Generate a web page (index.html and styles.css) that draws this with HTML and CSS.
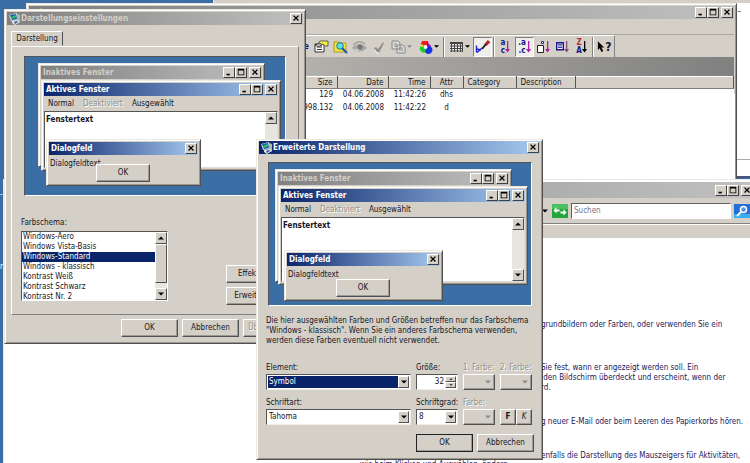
FILE: index.html
```html
<!DOCTYPE html>
<html lang="de">
<head>
<meta charset="utf-8">
<title>Darstellungseinstellungen</title>
<link rel="stylesheet" href="styles.css">
</head>
<body>
<svg class="defs" aria-hidden="true">
  <symbol id="min" viewBox="0 0 12 11"><path d="M3 7h4v2H3z"/></symbol>
  <symbol id="max" viewBox="0 0 12 11"><path d="M2 1h8v8H2zM3 3v5h6V3z" fill-rule="evenodd"/></symbol>
  <symbol id="close" viewBox="0 0 12 11"><path d="M3 2l6 6M9 2l-6 6" stroke="#000" stroke-width="1.6"/></symbol>
  <symbol id="down" viewBox="0 0 8 8"><path d="M1 2.500h6L4 5.500z"/></symbol>
  <symbol id="up" viewBox="0 0 8 8"><path d="M1 5.500h6L4 2.500z"/></symbol>
  <symbol id="screen" viewBox="0 0 12 12">
    <path d="M0 2l8-2 1 7-7 1z" fill="#c4dcd4"/><path d="M1 2l6-1 1 5-5 1z" fill="#1c5bb8"/>
    <path d="M2 4l5-2 .5 2L3 6z" fill="#35c15a"/><path d="M8 1l3 1v7l-3 1z" fill="#a9bba9"/>
    <path d="M3 8l6-1 2 2-5 3-3-2z" fill="#dfe6e0"/><path d="M5 9l3-1 1 1-3 2z" fill="#3a5a9c"/>
  </symbol>
  <symbol id="arrow" viewBox="0 0 5 12"><path d="M2 0h1.300v8H5l-2.400 3.500L0 8h2z"/></symbol>
</svg>

<main class="desktop">
  <span class="mark">--</span>
  <span class="shortcut">r</span>

  <section class="back-window" aria-label="Hintergrundfenster"><div class="back-page">–</div><div class="back-foot"></div></section>

  <section class="window manager" aria-label="Dateimanager">
    <header class="title idle">
      <svg class="folder" viewBox="0 0 10 10"><path d="M0 3q5-5 10 0v7H0z" fill="#efe239"/></svg>
      <span class="grow"></span>
      <button aria-label="Minimieren"><svg><use href="#min"/></svg></button><button aria-label="Maximieren"><svg><use href="#max"/></svg></button><button class="apart" aria-label="Schließen"><svg><use href="#close"/></svg></button>
    </header>
    <div class="manager-menu"></div>
    <div class="toolbar">
      <span class="tool-text">e</span>
      <button aria-label="Eigenschaften"><svg viewBox="0 0 15 14"><path d="M1 4h9v8H1z" fill="#fff" stroke="#333"/><path d="M3 7h5M3 9.500h5" stroke="#333"/><path d="M6 1h8v5h-3L9 4 6 6 4 4z" fill="#f2ee4a" stroke="#444" stroke-width=".8"/><path d="M1 5l5-2 2 2-4 2z" fill="#bbb" stroke="#222" stroke-width=".7"/></svg></button>
      <button aria-label="Suchen im Ordner"><svg viewBox="0 0 15 14"><path d="M1 2h5l1 1h6v9H1z" fill="#f5e43e" stroke="#ad9a21"/><circle cx="7" cy="6" r="3.300" fill="#5fe0e6" stroke="#237b9a"/><path d="M9 8l5 5" stroke="#1c51b5" stroke-width="2"/></svg></button>
      <button aria-label="Ansehen"><svg viewBox="0 0 15 14"><path d="M0 8q7-8 15 0-8 7-15 0z" fill="#a5a5a1"/><circle cx="8" cy="7" r="2.500" fill="#777"/><path d="M1 5q6-6 12-1" fill="none" stroke="#888"/><path d="M3 9q2 2 4 1" fill="none" stroke="#eee"/></svg></button>
      <button aria-label="Prüfen"><svg viewBox="0 0 15 14"><path d="M3 8l2-1 2 2 5-7 1 1-5 10H6z" fill="#929292"/><path d="M4 10l2 3 2 0" fill="none" stroke="#fff"/></svg></button>
      <button class="wide" aria-label="Kopieren"><svg viewBox="0 0 15 14"><path d="M1 1h6l2 2v6H1zM6 5h6l2 2v6H6z" fill="#ddd" stroke="#888"/><path d="M3 4h3M3 6h3M8 8h4M8 10h4" stroke="#888"/></svg><svg class="drop faded"><use href="#down"/></svg></button>
      <button class="wide" aria-label="Farben"><svg viewBox="0 0 15 14"><path d="M7 1a3.500 3.500 0 0 0-3 6h3z" fill="#ed1c24"/><path d="M4 1h6l1 5H3z" fill="#ed1c24"/><path d="M9 2l4 4v3l-4-2z" fill="#8a12b0"/><path d="M4 5a4 4 0 1 0 4 7l-1-5z" fill="#18cf2a"/><path d="M11 6a4 4 0 1 1-4 6l1-4z" fill="#1733e0"/><path d="M2 6l2-2 2 2-2 1z" fill="#f7e21e"/><circle cx="7.500" cy="7" r="1.900" fill="#fff"/></svg><svg class="drop"><use href="#down"/></svg></button>
      <i class="rule"></i>
      <button class="wide" aria-label="Tabelle"><svg viewBox="0 0 15 14"><path d="M1 2h13v10H1z" fill="#eee"/><path d="M1 3h13" stroke="#444" stroke-width="2"/><path d="M1 6h13M1 8.500h13M1 11h13M2.500 2v10M5.500 2v10M8.500 2v10M11.500 2v10M13.500 2v10" stroke="#444" fill="none"/></svg><svg class="drop"><use href="#down"/></svg></button>
      <button class="pressed" aria-label="Filter"><svg viewBox="0 0 15 14"><path d="M14 1l-3.500 4" stroke="#b7202a" stroke-width="3"/><path d="M11 4L7 9" stroke="#222" stroke-width="2"/><path d="M1.500 5.500v7M2 9l4 1M2 12.500L7 8" stroke="#2024d0" stroke-width="1.400" fill="none"/></svg></button>
      <i class="rule"></i>
      <button class="sort" aria-label="Nach Name sortieren"><span>a<br>c</span><svg class="pink"><use href="#arrow"/></svg></button>
      <button class="sort pressed" aria-label="Nach Erweiterung sortieren"><span>.a<br>.c</span><svg class="pink"><use href="#arrow"/></svg></button>
      <button class="sort" aria-label="Nach Größe sortieren"><svg viewBox="0 0 8 13"><path d="M.5 5.500h6v7h-6z" fill="#fff" stroke="#222"/><path d="M4.500 1.500h2v2h-2z" fill="#fff" stroke="#2a2a8a"/></svg><svg class="pink"><use href="#arrow"/></svg></button>
      <button class="sort" aria-label="Nach Datum sortieren"><svg viewBox="0 0 8 13"><path d="M.7 2.700h6.600v7H.7z" fill="#fff" stroke="#15158c" stroke-width="1.400"/><path d="M2 4.500h4M2 6h4M2 7.500h4" stroke="#15158c" stroke-width=".8"/></svg><svg class="mauve"><use href="#arrow"/></svg></button>
      <button class="sort" aria-label="Absteigend"><span><b>Z</b><br>A</span><svg><use href="#arrow"/></svg></button>
      <i class="rule"></i>
      <button class="help" aria-label="Hilfe"><svg viewBox="0 0 9 13"><path d="M1 0l7 7H5l2 4-2 1-2-4-2 2z"/></svg><span>?</span></button>
    </div>
    <div class="path-bar"></div>
    <table class="files">
      <colgroup><col class="c-size"><col class="c-date"><col class="c-time"><col class="c-attr"><col class="c-cat"><col class="c-desc"><col></colgroup>
      <thead><tr><th class="num">Size</th><th class="num">Date</th><th class="num">Time</th><th class="mid">Attr</th><th>Category</th><th>Description</th><th></th></tr></thead>
      <tbody>
        <tr><td class="num">129</td><td class="num">04.06.2008</td><td class="num">11:42:26</td><td class="mid">dhs</td><td></td><td></td><td></td></tr>
        <tr><td class="num">998.132</td><td class="num">04.06.2008</td><td class="num">11:42:22</td><td class="mid">d</td><td></td><td></td><td></td></tr>
      </tbody>
    </table>
  </section>

  <section class="window explorer" aria-label="Anpassung">
    <header class="title idle"><span class="grow"></span>
      <button aria-label="Minimieren"><svg><use href="#min"/></svg></button><button aria-label="Maximieren"><svg><use href="#max"/></svg></button><button class="apart" aria-label="Schließen"><svg><use href="#close"/></svg></button>
    </header>
    <div class="address">
      <svg class="drop"><use href="#down"/></svg>
      <button class="refresh" aria-label="Aktualisieren"><svg viewBox="0 0 16 14"><path d="M0 0h16v14H0z" fill="#22a53a"/><path d="M0 0h16v5H0z" fill="#4cc060"/><path d="M4.500 3L1.500 6.500l3 3v-2h3v-2h-3z" fill="#fff"/><path d="M11.500 5l3 3.500-3 3v-2h-3v-2h3z" fill="#fff"/></svg></button>
      <input type="search" placeholder="Suchen" aria-label="Suchen">
      <button class="lens" aria-label="Suche starten"><svg viewBox="0 0 16 14"><path d="M0 0h16v14H0z" fill="#236fd8"/><path d="M0 10h16v4H0z" fill="#35b0f4"/><circle cx="9.500" cy="5.500" r="3" fill="#4d8fe2" stroke="#fff" stroke-width="1.600"/><path d="M7 8l-4 4" stroke="#fff" stroke-width="2"/></svg></button>
    </div>
    <div class="explorer-menu"></div>
    <div class="page">
      <p class="first">grundbildern oder Farben, oder verwenden Sie ein</p>
      <p>Sie fest, wann er angezeigt werden soll. Ein<br>&nbsp;den Bildschirm überdeckt und erscheint, wenn der<br>rd.</p>
      <p>g neuer E-Mail oder beim Leeren des Papierkorbs hören.</p>
      <p>enfalls die Darstellung des Mauszeigers für Aktivitäten,</p>
      <p class="last">wie beim Klicken und Auswählen, ändern.</p>
    </div>
  </section>

  <section class="window settings" aria-label="Darstellungseinstellungen">
    <header class="title idle"><svg class="app"><use href="#screen"/></svg><h1>Darstellungseinstellungen</h1>
      <button aria-label="Schließen"><svg><use href="#close"/></svg></button></header>
    <div class="tabs"><button class="tab">Darstellung</button></div>
    <div class="pane">
      <div class="preview small">
        <div class="mini inactive"><div class="title idle"><h2>Inaktives Fenster</h2><button aria-label="Minimieren"><svg><use href="#min"/></svg></button><button aria-label="Maximieren"><svg><use href="#max"/></svg></button><button class="apart" aria-label="Schließen"><svg><use href="#close"/></svg></button></div></div>
        <div class="mini active">
          <div class="title"><h2>Aktives Fenster</h2><button aria-label="Minimieren"><svg><use href="#min"/></svg></button><button aria-label="Maximieren"><svg><use href="#max"/></svg></button><button class="apart" aria-label="Schließen"><svg><use href="#close"/></svg></button></div>
          <div class="menu"><span>Normal</span><span class="off">Deaktiviert</span><span>Ausgewählt</span></div>
          <div class="sheet"><b>Fenstertext</b><div class="scroll"><button aria-label="Nach oben"><svg><use href="#up"/></svg></button><i></i><button aria-label="Nach unten"><svg><use href="#down"/></svg></button></div></div>
        </div>
        <div class="mini dialog"><div class="title"><h2>Dialogfeld</h2><button aria-label="Schließen"><svg><use href="#close"/></svg></button></div><p>Dialogfeldtext</p><button class="push">OK</button></div>
      </div>
      <div class="scheme">
        <div>
          <label for="scheme">Farbschema:</label>
          <div class="list">
            <select id="scheme" size="7"><option>Windows-Aero</option><option>Windows Vista-Basis</option><option selected>Windows-Standard</option><option>Windows - klassisch</option><option>Kontrast Weiß</option><option>Kontrast Schwarz</option><option>Kontrast Nr. 2</option></select>
            <div class="scroll"><button aria-label="Nach oben"><svg><use href="#up"/></svg></button><i class="thumb"></i><button aria-label="Nach unten"><svg><use href="#down"/></svg></button></div>
          </div>
        </div>
        <div class="side"><button class="push">Effekte...</button><button class="push">Erweitert...</button></div>
      </div>
    </div>
    <footer class="actions"><button class="push">OK</button><button class="push">Abbrechen</button><button class="push off" disabled>Übernehmen</button></footer>
  </section>

  <section class="window advanced" aria-label="Erweiterte Darstellung">
    <header class="title"><svg class="app"><use href="#screen"/></svg><h1>Erweiterte Darstellung</h1>
      <button aria-label="Schließen"><svg><use href="#close"/></svg></button></header>
    <div class="preview large">
      <div class="mini inactive"><div class="title idle"><h2>Inaktives Fenster</h2><button aria-label="Minimieren"><svg><use href="#min"/></svg></button><button aria-label="Maximieren"><svg><use href="#max"/></svg></button><button class="apart" aria-label="Schließen"><svg><use href="#close"/></svg></button></div></div>
      <div class="mini active">
        <div class="title"><h2>Aktives Fenster</h2><button aria-label="Minimieren"><svg><use href="#min"/></svg></button><button aria-label="Maximieren"><svg><use href="#max"/></svg></button><button class="apart" aria-label="Schließen"><svg><use href="#close"/></svg></button></div>
        <div class="menu"><span>Normal</span><span class="off">Deaktiviert</span><span>Ausgewählt</span></div>
        <div class="sheet"><b>Fenstertext</b><div class="scroll"><button aria-label="Nach oben"><svg><use href="#up"/></svg></button><i></i><button aria-label="Nach unten"><svg><use href="#down"/></svg></button></div></div>
      </div>
      <div class="mini dialog"><div class="title"><h2>Dialogfeld</h2><button aria-label="Schließen"><svg><use href="#close"/></svg></button></div><p>Dialogfeldtext</p><button class="push">OK</button></div>
    </div>
    <p class="note">Die hier ausgewählten Farben und Größen betreffen nur das Farbschema<br>"Windows - klassisch". Wenn Sie ein anderes Farbschema verwenden,<br>werden diese Farben eventuell nicht verwendet.</p>
    <form class="fields">
      <div><label for="element">Element:</label><div class="combo chosen"><select id="element"><option>Symbol</option></select><span class="knob"><svg><use href="#down"/></svg></span></div></div>
      <div><label for="size">Größe:</label><div class="combo"><input id="size" type="text" value="32"><span class="spin"><span><svg><use href="#up"/></svg></span><span><svg><use href="#down"/></svg></span></span></div></div>
      <div><label class="off" for="color1">1. Farbe:</label><button type="button" id="color1" class="push color" disabled><svg><use href="#down"/></svg></button></div>
      <div><label class="off" for="color2">2. Farbe:</label><button type="button" id="color2" class="push color" disabled><svg><use href="#down"/></svg></button></div>
      <div><label for="font">Schriftart:</label><div class="combo"><select id="font"><option>Tahoma</option></select><span class="knob"><svg><use href="#down"/></svg></span></div></div>
      <div><label for="points">Schriftgrad:</label><div class="combo"><select id="points"><option>8</option></select><span class="knob"><svg><use href="#down"/></svg></span></div></div>
      <div><label class="off" for="color3">Farbe:</label><button type="button" id="color3" class="push color" disabled><svg><use href="#down"/></svg></button></div>
      <div class="styles"><button type="button" class="push"><b>F</b></button><button type="button" class="push"><em>K</em></button></div>
    </form>
    <footer class="actions"><button class="push default">OK</button><button class="push">Abbrechen</button></footer>
  </section>
</main>
</body>
</html>
```
FILE: styles.css
```css
:root {
  --face: #d4d0c8;
  --desk: #3a6ea5;
  --navy: #0a246a;
  --shade: #808080;
  --dark: #404040;
}
* { box-sizing: border-box; }
body {
  margin: 0;
  font: 8px/10px "DejaVu Sans Condensed", "DejaVu Sans", sans-serif;
  color: #15151f;
}
h1, h2, p { margin: 0; font-size: inherit; }
button, input, select { font: inherit; color: inherit; margin: 0; padding: 0; border-radius: 0; }
button { border: 0; background: none; }
svg { display: block; }
label { display: block; white-space: nowrap; }
.defs { position: absolute; width: 0; height: 0; }
.grow { flex: 1; }

.desktop { position: relative; height: 100vh; overflow: hidden; background: var(--desk); }
.mark, .shortcut { position: absolute; left: 0; color: #fff; }
.mark { top: 190px; }
.shortcut { top: 262px; }

.window, .mini {
  position: absolute;
  display: flex;
  flex-direction: column;
  background: var(--face);
  border: 1px solid;
  border-color: #ece9e2 #505050 #505050 #ece9e2;
  box-shadow: inset 1px 1px #fff, inset -1px -1px #98968f;
}

/* Title bars */
.title {
  display: flex;
  flex: none;
  align-items: center;
  height: 13px;
  padding: 0 1px 0 2px;
  color: #fff;
  font-weight: bold;
  white-space: nowrap;
  background: linear-gradient(90deg, var(--navy), #a6caf0);
}
.title.idle { color: #d4d0c8; background: linear-gradient(90deg, #808080, #c0c0c0); }
.title h1, .title h2 { flex: 1; }
.title button {
  width: 12px;
  height: 11px;
  background: var(--face);
  border: 1px solid;
  border-color: #fff var(--dark) var(--dark) #fff;
}
.title button svg { width: 10px; height: 9px; }
.title .apart { margin-left: 2px; }
.app { width: 12px; height: 12px; }

/* Shared controls */
.push {
  background: var(--face);
  border: 1px solid;
  border-color: #fff #505050 #505050 #fff;
  box-shadow: inset -1px -1px #9c9a93;
  height: 18px;
}
.off { color: #918f89; text-shadow: 1px 1px #fff; }
.scroll { display: flex; flex-direction: column; flex: none; width: 12px; background: #e8e5df; }
.scroll button {
  height: 12px;
  flex: none;
  display: grid;
  place-items: center;
  background: var(--face);
  border: 1px solid;
  border-color: #fff #505050 #505050 #fff;
}
.scroll svg, .drop, .knob svg, .color svg { width: 8px; height: 8px; }
.scroll i { flex: 1; }
.scroll .thumb { flex: none; height: 39px; margin-bottom: auto; background: var(--face); border: 1px solid; border-color: #fff #505050 #505050 #fff; }

/* Window behind the file manager */
.back-window {
  position: absolute;
  left: 213px;
  right: 0;
  top: 0;
  height: 178px;
  display: flex;
  flex-direction: column;
  background: #fff;
  border-top: 3px solid var(--face);
  border-left: 2px solid #eee;
  border-bottom: 2px solid #44567c;
}
.back-page { flex: 1; text-align: right; padding: 4px 9px; }
.back-foot { height: 17px; border-top: 1px solid #aaa; }

/* File manager */
.manager { left: 26px; right: 13px; top: 3px; height: 210px; padding: 2px; background: linear-gradient(var(--face) 90px, #fff 0); }
.folder { width: 10px; height: 10px; margin-left: 5px; }
.manager-menu { height: 16px; border-bottom: 1px solid #aaa79f; }
.toolbar {
  display: flex;
  align-items: center;
  align-self: flex-start;
  height: 22px;
  padding-left: 275px;
  border-right: 1px solid var(--shade);
  border-top: 1px solid #fff;
}
.tool-text { width: 8px; color: #15158c; font-weight: bold; }
.toolbar button { display: flex; align-items: center; justify-content: center; width: 19px; height: 20px; flex: none; }
.toolbar button > svg:first-child { width: 15px; height: 14px; }
.toolbar button.wide { width: 27px; }
.toolbar .wide .drop { width: 7px; height: 7px; }
.toolbar .faded { fill: #888; }
.toolbar .pressed { background: #f0eeea; border: 1px solid; border-color: var(--shade) #fff #fff var(--shade); }
.rule { width: 2px; height: 20px; margin: 0 1px; border-left: 1px solid var(--shade); border-right: 1px solid #fff; }
.toolbar .sort > svg:first-child { width: 8px; height: 13px; }
.toolbar .sort > svg:last-child { width: 5px; height: 12px; }
.sort span { font-weight: bold; line-height: 8px; color: #15158c; }
.sort b { color: #b52a3a; }
.pink { fill: #b01ba5; }
.mauve { fill: #8a4a80; }
.toolbar .help > svg:first-child { width: 8px; height: 12px; }
.help span { font-size: 12px; font-weight: bold; }
.path-bar { height: 19px; flex: none; background: linear-gradient(90deg, #d4d0c8, #808080); }
.files { width: 100%; table-layout: fixed; border-collapse: collapse; background: #fff; border-top: 1px solid #fff; }
.c-size { width: 308px; }
.c-date { width: 51px; }
.c-time { width: 42px; }
.c-attr { width: 33px; }
.c-cat { width: 53px; }
.c-desc { width: 59px; }
.files th, .files td { padding: 0 4px; text-align: left; font-weight: normal; white-space: nowrap; height: 13px; }
.files th { height: 12px; background: var(--face); border-right: 1px solid #555; border-bottom: 1px solid var(--shade); }
.files .num { text-align: right; }
.files .mid { text-align: center; }

/* Explorer */
.explorer { left: 3px; right: -7px; top: 179px; bottom: -20px; padding: 2px; background: #fff; }
.explorer .title { height: 16px; }
.address { display: flex; align-items: center; gap: 3px; height: 26px; padding: 0 4px 0 535px; background: var(--face); border-bottom: 1px solid var(--shade); }
.address button svg { width: 16px; height: 14px; }
.address input { flex: 1; min-width: 0; height: 16px; padding: 0 2px; border: 1px solid; border-color: #606060 #fff #fff #606060; background: #fff; outline: 0; }
.address input::placeholder { color: #77728a; opacity: 1; }
.explorer-menu { height: 14px; flex: none; background: var(--face); border-top: 1px solid #fff; }
.page { display: flex; flex-direction: column; gap: 24px; padding: 82px 0 0 535px; white-space: nowrap; color: #20205c; }
.page .first { margin-bottom: 9px; }
.page .last { margin: -25px 0 0 -181px; }

/* Appearance settings dialog */
.settings { left: 4px; top: 9px; width: 302px; padding: 2px; }
.settings > .title { margin-bottom: 6px; }
.tabs { display: flex; padding-left: 4px; height: 15px; }
.tab { width: 52px; border: 1px solid; border-color: #fff #505050 transparent #fff; }
.pane { margin: 0 4px; border: 1px solid; border-color: #fff var(--shade) var(--shade) #fff; padding: 9px 12px; }
.preview { position: relative; background: var(--desk); border: 1px solid; border-color: #555 #fff #fff #555; }
.small { height: 140px; }
.scheme { display: flex; justify-content: space-between; margin: 22px 0 0 -3px; }
.list { display: flex; width: 147px; height: 70px; margin-top: 3px; border: 1px solid; border-color: #555 #fff #fff #555; background: #fff; }
.list select { flex: 1; min-width: 0; border: 0; outline: 0; overflow: hidden; background: #fff; height: 68px; }
.list option { padding: 0 1px; min-height: 10px; height: 10px; line-height: 10px; }
.list option:checked { color: #fff; background: var(--navy) linear-gradient(var(--navy), var(--navy)); }
.side { display: flex; flex-direction: column; gap: 4px; margin: 47px 4px 0 0; }
.side .push { width: 56px; }
.actions { display: flex; justify-content: flex-end; gap: 4px; }
.actions .push { width: 57px; }
.settings .actions { padding: 4px 3px 4px 0; }

/* Sample windows in the previews */
.mini { padding: 2px; }
.menu { display: flex; flex: none; gap: 9px; height: 15px; padding: 3px 0 0 4px; white-space: nowrap; }
.sheet { flex: 1; display: flex; justify-content: space-between; min-height: 0; background: #fff; border: 1px solid; border-color: #555 #ddd #ddd #555; }
.sheet b { padding: 3px 1px; }
.sheet i { background: #e8e5df; }
.dialog p { padding: 4px 1px 0; }
.mini .push { position: absolute; width: 54px; }
.small .inactive { left: 13px; top: 6px; width: 227px; height: 104px; }
.small .active { left: 16px; top: 23px; width: 240px; height: 91px; }
.small .dialog { left: 21px; top: 82px; width: 155px; height: 47px; }
.small .push { left: 49px; top: 24px; }
.large .inactive { left: 6px; top: 6px; width: 237px; height: 113px; }
.large .active { left: 9px; top: 23px; width: 250px; height: 99px; }
.large .dialog { left: 15px; top: 87px; width: 159px; height: 51px; }
.large .push { left: 51px; top: 28px; }

/* Advanced appearance dialog */
.advanced { left: 256px; top: 139px; width: 287px; padding: 1px 2px; }
.large { height: 144px; margin: 8px 8px 0 9px; }
.note { margin: 10px 0 17px 7px; white-space: nowrap; }
.fields { display: grid; grid-template-columns: 1fr 42px 32px 32px; gap: 8px 5px; margin: 0 8px 0 7px; }
.fields label { margin-bottom: 1px; }
.combo { display: flex; height: 16px; padding: 1px; background: #fff; border: 1px solid; border-color: #555 #eee #eee #555; }
.combo select, .combo input { flex: 1; min-width: 0; width: 10px; border: 0; outline: 0; appearance: none; background: #fff; padding: 0 1px; }
.combo input { text-align: right; }
.combo.chosen select { color: #fff; background: var(--navy); }
.knob { width: 11px; display: grid; place-items: center; background: var(--face); border: 1px solid; border-color: #fff #505050 #505050 #fff; pointer-events: none; }
.spin { width: 11px; display: flex; flex-direction: column; }
.spin span { flex: 1; display: grid; place-items: center; background: var(--face); border: 1px solid; border-color: #fff #505050 #505050 #fff; }
.spin svg { width: 4px; height: 4px; }
.fields .push { height: 16px; }
.fields .color { width: 100%; display: flex; align-items: center; justify-content: flex-end; padding-right: 2px; }
.color svg { fill: #8c8a84; }
.styles { display: flex; align-items: flex-end; }
.styles .push { flex: 1; }
.advanced .actions { padding: 9px 6px 6px 0; }
.default { outline: 1px solid #222; outline-offset: -1px; }
```
